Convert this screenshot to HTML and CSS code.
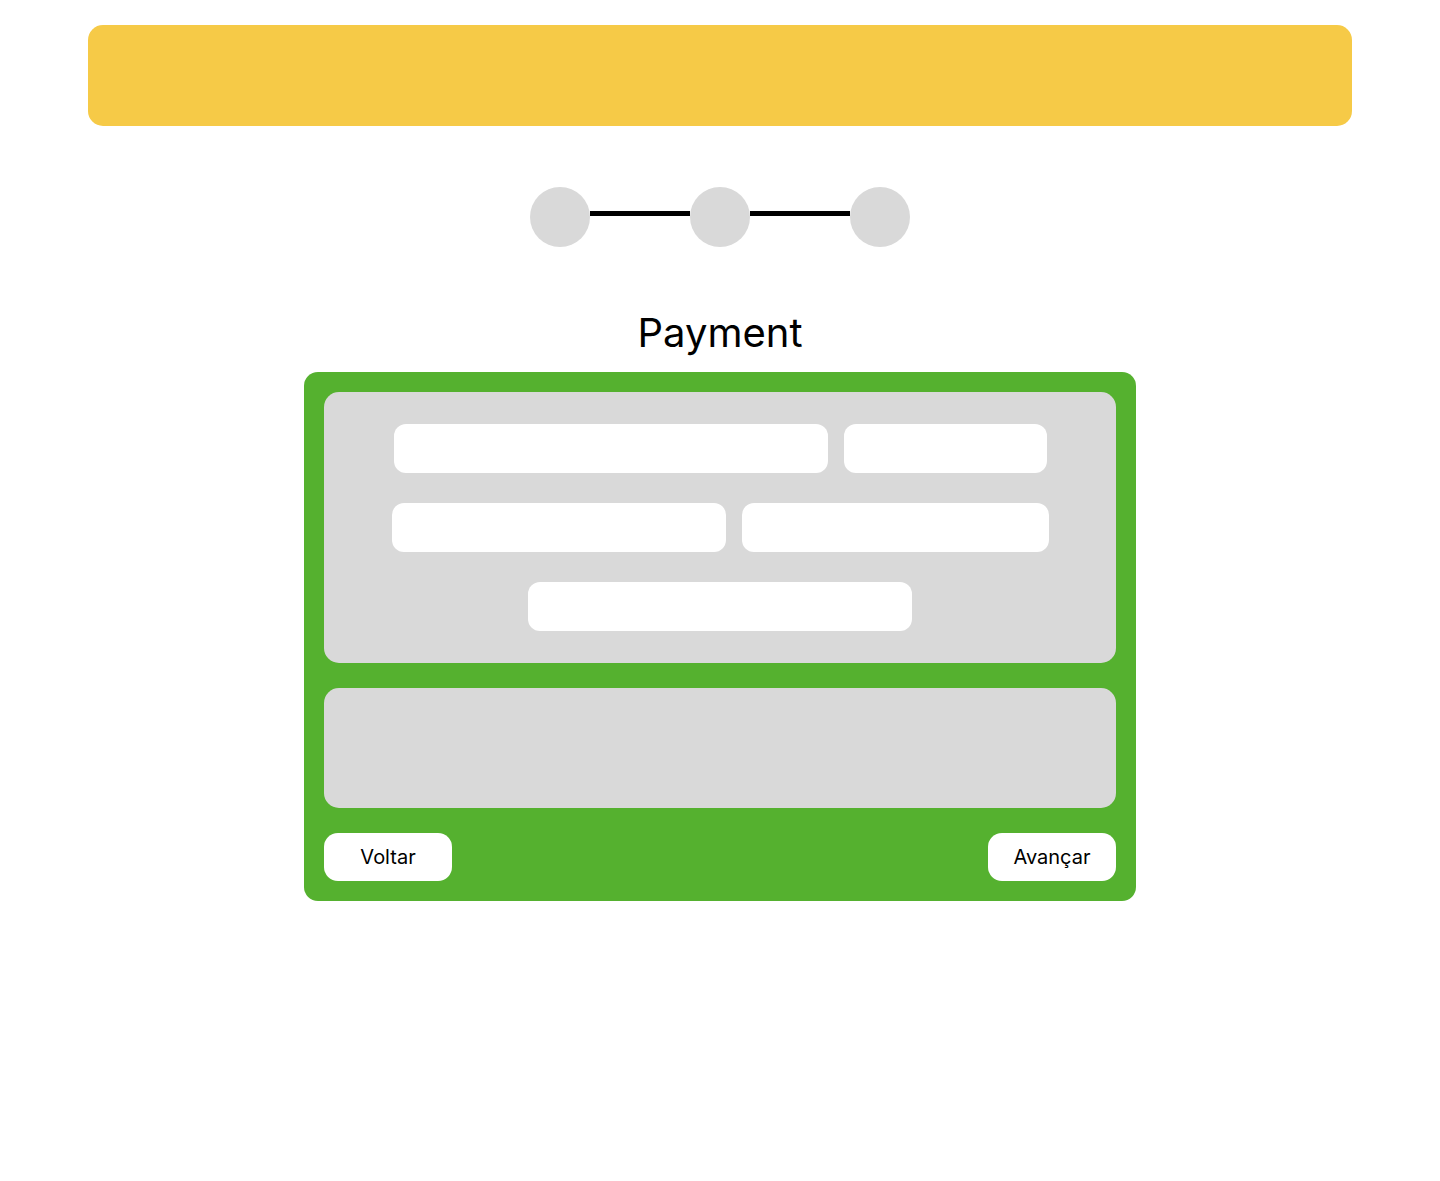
FILE: index.html
```html
<!DOCTYPE html>
<html lang="pt">
<head>
<meta charset="utf-8">
<title>Payment</title>
<link rel="stylesheet" href="styles.css">
</head>
<body>
<header class="topbar"></header>
<div class="stepper">
  <span class="step"></span>
  <span class="step-line"></span>
  <span class="step"></span>
  <span class="step-line"></span>
  <span class="step"></span>
</div>
<h1 class="title">Payment</h1>
<main class="card">
  <section class="panel fields">
    <div class="row">
      <div class="field w434"></div>
      <div class="field w203"></div>
    </div>
    <div class="row">
      <div class="field w334"></div>
      <div class="field w307"></div>
    </div>
    <div class="row">
      <div class="field w384"></div>
    </div>
  </section>
  <section class="panel summary"></section>
  <div class="actions">
    <button class="btn">Voltar</button>
    <button class="btn">Avançar</button>
  </div>
</main>
</body>
</html>
```

FILE: styles.css
```css
* { box-sizing: border-box; }
html, body { margin: 0; padding: 0; background: #ffffff; }
body {
  font-family: Inter, "Noto Sans", sans-serif;
  color: #000;
  padding-top: 25px;
}
.topbar {
  margin: 0 88px;
  height: 101px;
  background: #f6ca47;
  border-radius: 15px;
}
.stepper {
  display: flex;
  justify-content: center;
  align-items: flex-start;
  margin-top: 61px;
}
.step {
  width: 60px;
  height: 60px;
  border-radius: 50%;
  background: #d9d9d9;
}
.step-line {
  width: 100px;
  height: 5px;
  margin-top: 24px;
  background: #000;
}
.title {
  margin: 62px 0 0;
  text-align: center;
  font-weight: 400;
  font-size: 40px;
  line-height: 48px;
  height: 63px;
}
.card {
  width: 832px;
  margin: 0 auto;
  background: #55b12f;
  border-radius: 14px;
  padding: 20px;
  display: flex;
  flex-direction: column;
  gap: 25px;
}
.panel {
  background: #d9d9d9;
  border-radius: 15px;
}
.fields {
  padding: 32px 0;
  display: flex;
  flex-direction: column;
  gap: 30px;
}
.row {
  display: flex;
  justify-content: center;
  gap: 16px;
}
.field {
  height: 49px;
  background: #fff;
  border-radius: 12px;
}
.w434 { width: 434px; }
.w203 { width: 203px; }
.w334 { width: 334px; }
.w307 { width: 307px; }
.w384 { width: 384px; }
.summary { height: 120px; }
.actions {
  display: flex;
  justify-content: space-between;
}
.btn {
  width: 128px;
  height: 48px;
  border: none;
  border-radius: 14px;
  background: #fff;
  font-family: Inter, "Noto Sans", sans-serif;
  font-size: 20px;
  color: #000;
  padding: 0;
}
```
